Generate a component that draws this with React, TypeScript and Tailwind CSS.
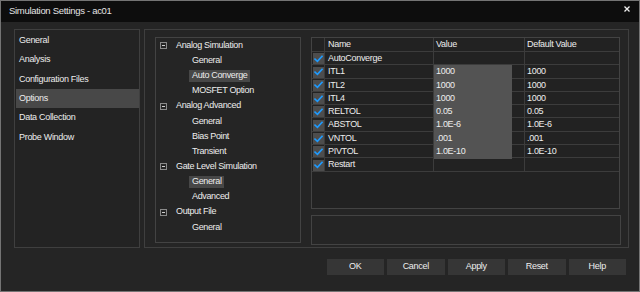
import React from "react";

const font = { fontFamily: '"Liberation Sans", Arial, sans-serif' };

const navItems = [
	"General",
	"Analysis",
	"Configuration Files",
	"Options",
	"Data Collection",
	"Probe Window",
];

type TreeRow = { label: string; level: 0 | 1; selected?: boolean };

const treeRows: TreeRow[] = [
	{ label: "Analog Simulation", level: 0 },
	{ label: "General", level: 1 },
	{ label: "Auto Converge", level: 1, selected: true },
	{ label: "MOSFET Option", level: 1 },
	{ label: "Analog Advanced", level: 0 },
	{ label: "General", level: 1 },
	{ label: "Bias Point", level: 1 },
	{ label: "Transient", level: 1 },
	{ label: "Gate Level Simulation", level: 0 },
	{ label: "General", level: 1, selected: true },
	{ label: "Advanced", level: 1 },
	{ label: "Output File", level: 0 },
	{ label: "General", level: 1 },
];

const params = [
	{ name: "AutoConverge", value: "", def: "", editable: false },
	{ name: "ITL1", value: "1000", def: "1000", editable: true },
	{ name: "ITL2", value: "1000", def: "1000", editable: true },
	{ name: "ITL4", value: "1000", def: "1000", editable: true },
	{ name: "RELTOL", value: "0.05", def: "0.05", editable: true },
	{ name: "ABSTOL", value: "1.0E-6", def: "1.0E-6", editable: true },
	{ name: "VNTOL", value: ".001", def: ".001", editable: true },
	{ name: "PIVTOL", value: "1.0E-10", def: "1.0E-10", editable: true },
	{ name: "Restart", value: "", def: "", editable: false },
];

const MinusBox = () => (
	<span className="flex items-center justify-center w-[7px] h-[7px] border border-[#8a8a8a]">
		<span className="block w-[3px] h-px bg-[#cfcfcf]" />
	</span>
);

const Check = () => (
	<span className="flex items-center justify-center w-[11px] h-[11px] bg-[#4d4d4d]">
		<svg width="9" height="8" viewBox="0 0 9 8" fill="none">
			<path
				d="M1 4.2L3.4 6.4L8 1.3"
				stroke="#1e9bff"
				strokeWidth="1.6"
				strokeLinecap="square"
			/>
		</svg>
	</span>
);

export default function App() {
	return (
		<div
			style={font}
			className="w-[640px] h-[292px] flex flex-col bg-[#252525] border border-[#747474] text-[#ededed] text-[9px] tracking-[-0.3px] overflow-hidden"
		>
			{/* title bar */}
			<div className="h-[21px] shrink-0 bg-[#0d0d0d] flex items-center justify-between pl-[8px] pr-[9px]">
				<span className="text-[9.5px] text-[#e4e4e4]">Simulation Settings - ac01</span>
				<svg width="6" height="6" viewBox="0 0 6 6" className="mb-[6px]">
					<path d="M0.5 0.5L5.5 5.5M5.5 0.5L0.5 5.5" stroke="#f0f0f0" strokeWidth="1.3" />
				</svg>
			</div>

			<div className="flex gap-[4px] pl-[13px] pt-[7px]">
				{/* left nav */}
				<div className="w-[126px] h-[219px] border border-[#3f3f3f] bg-[#232323] pt-px">
					{navItems.map((item) => (
						<div
							key={item}
							className={`h-[19.35px] flex items-center pl-[3px] ml-px ${
								item === "Options" ? "bg-[#484848]" : ""
							}`}
						>
							{item}
						</div>
					))}
				</div>

				{/* main group */}
				<div className="w-[485px] h-[219px] border border-[#3f3f3f] flex gap-[10px] pl-[10px] pt-[7px]">
					<div className="w-[146px] h-[206px] border border-[#434343] tracking-[-0.35px]">
						{treeRows.map((row, i) => (
							<div key={i} className="h-[15.15px] flex items-center">
								{row.level === 0 ? (
									<>
										<span className="ml-[4px]">
											<MinusBox />
										</span>
										<span className="ml-[9px]">{row.label}</span>
									</>
								) : (
									<span
										className={`ml-[33px] pl-[3px] pr-[2px] h-[12px] flex items-center ${
											row.selected ? "bg-[#474747]" : ""
										}`}
									>
										{row.label}
									</span>
								)}
							</div>
						))}
					</div>

					<div className="flex flex-col gap-[6px]">
						<div className="w-[309px] h-[172px] border border-[#434343] bg-[#222222]">
							<div className="grid grid-cols-[13px_109px_91px_1fr] h-[14px] border-b border-[#3c3c3c]">
								<div className="border-r border-[#3c3c3c]" />
								<div className="border-r border-[#3c3c3c] pl-[3px] flex items-center">Name</div>
								<div className="border-r border-[#3c3c3c] pl-[2px] flex items-center">Value</div>
								<div className="pl-[2px] flex items-center">Default Value</div>
							</div>
							{params.map((p) => (
								<div
									key={p.name}
									className="grid grid-cols-[13px_109px_91px_1fr] h-[13.3px] border-b border-[#3c3c3c]"
								>
									<div className="border-r border-[#3c3c3c] flex items-center justify-center">
										<Check />
									</div>
									<div className="border-r border-[#3c3c3c] pl-[3px] flex items-center">{p.name}</div>
									<div className="border-r border-[#3c3c3c] flex items-center">
										<span
											className={`h-full flex items-center pl-[2px] ${
												p.editable ? "w-[78px] bg-[#535353]" : ""
											}`}
										>
											{p.value}
										</span>
									</div>
									<div className="pl-[2px] flex items-center">{p.def}</div>
								</div>
							))}
						</div>
						<div className="w-[310px] h-[30px] border border-[#434343]" />
					</div>
				</div>
			</div>

			{/* buttons */}
			<div className="flex justify-end gap-[3px] pr-[13px] mt-[11px]">
				{["OK", "Cancel", "Apply", "Reset", "Help"].map((b) => (
					<button
						key={b}
						type="button"
						className="w-[57.5px] h-[16px] bg-[#363636] text-[#eeeeee] text-[9px] flex items-center justify-center"
					>
						{b}
					</button>
				))}
			</div>
		</div>
	);
}
